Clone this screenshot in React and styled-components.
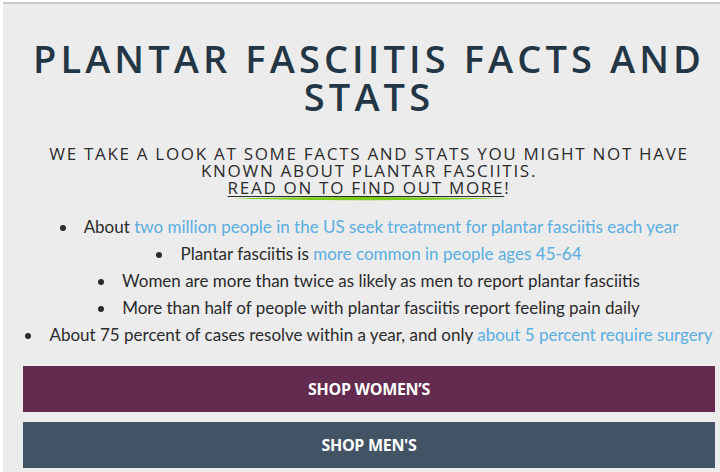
import React from 'react'
import styled, { createGlobalStyle } from 'styled-components';

const GlobalStyle = createGlobalStyle`
  html, body {
    margin: 0;
    padding: 0;
    background: #ffffff;
  }
`;

const Page = styled.div`
  margin: 2px 0 0 3px;
  border-top: 2px solid #c8c8c8;
  background-color: #ececec;
  padding: 0 5px 4px 20px;
  min-height: 466px;
  box-sizing: border-box;
`;

const Title = styled.h1`
  margin: 0;
  padding-top: 35px;
  text-align: center;
  font-family: "Open Sans", sans-serif;
  font-weight: 600;
  font-size: 38px;
  line-height: 38px;
  letter-spacing: 4.1px;
  color: #233645;
`;

const Intro = styled.p`
  margin: 30px 0 0;
  text-align: center;
  font-family: "Open Sans", sans-serif;
  font-weight: 400;
  font-size: 17px;
  line-height: 17px;
  letter-spacing: 1.7px;
  color: #2c2c2c;
  text-transform: uppercase;
`;

const Highlight = styled.span`
  position: relative;
  display: inline-block;

  u {
    text-decoration-thickness: 1px;
    text-underline-offset: 2px;
  }

  svg {
    position: absolute;
    left: 3px;
    bottom: -6px;
  }
`;

const Facts = styled.ul`
  margin: 17px 0 0;
  padding: 0;
  list-style-position: inside;
  text-align: center;
  font-family: Lato, sans-serif;
  font-size: 17px;
  line-height: 27px;
  color: #2b2b2b;

  li::marker {
    color: #2b2b2b;
  }

  a {
    color: #5aaee0;
    text-decoration: none;
  }
`;

const ShopButton = styled.a`
  display: flex;
  align-items: center;
  justify-content: center;
  height: 46px;
  margin-top: ${p => p.$first ? '18px' : '10px'};
  background-color: ${p => p.$color};
  color: #ffffff;
  font-family: "Open Sans", sans-serif;
  font-weight: 700;
  font-size: 16px;
  letter-spacing: -0.3px;
  text-decoration: none;
`;

const App = () => {
    return (
        <Page>
            <GlobalStyle />
            <Title>PLANTAR FASCIITIS FACTS AND STATS</Title>
            <Intro>
                We take a look at some facts and stats you might not have<br />
                known about plantar fasciitis.<br />
                <Highlight>
                    <u>Read on to find out more</u>!
                    <svg width="274" height="6" viewBox="0 0 274 6" preserveAspectRatio="none">
                        <path d="M0 2.6 Q137 -0.8 274 2.6 Q137 6 0 2.6 Z" fill="#78cc17" />
                    </svg>
                </Highlight>
            </Intro>
            <Facts>
                <li>About <a href="#">two million people in the US seek treatment for plantar fasciitis each year</a></li>
                <li>Plantar fasciitis is <a href="#">more common in people ages 45-64</a></li>
                <li>Women are more than twice as likely as men to report plantar fasciitis</li>
                <li>More than half of people with plantar fasciitis report feeling pain daily</li>
                <li>About 75 percent of cases resolve within a year, and only <a href="#">about 5 percent require surgery</a></li>
            </Facts>
            <ShopButton href="#" $first $color="#632b4f">SHOP WOMEN’S</ShopButton>
            <ShopButton href="#" $color="#415365">SHOP MEN'S</ShopButton>
        </Page>
    )
}

export default App
